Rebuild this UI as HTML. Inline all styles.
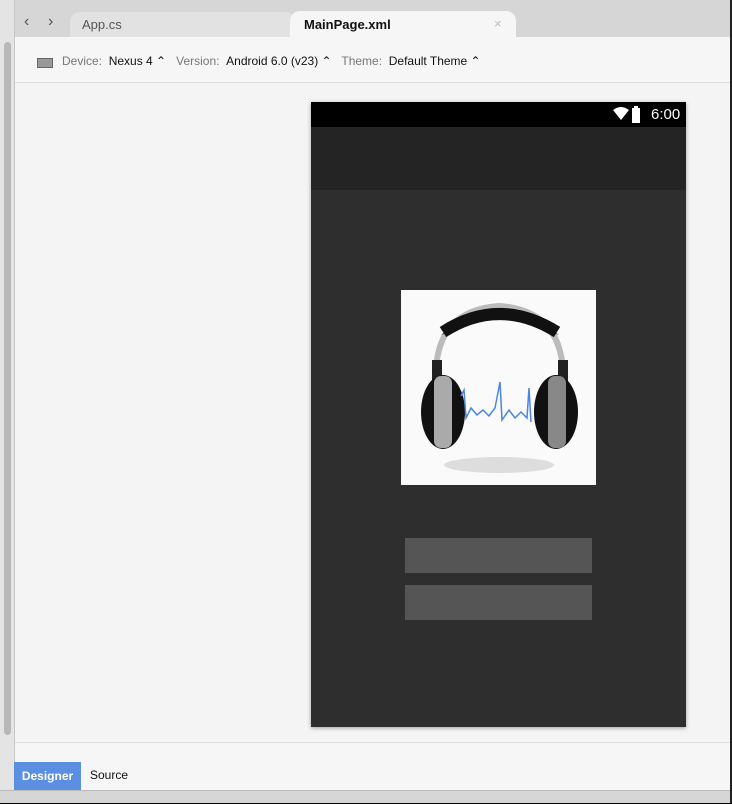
<!DOCTYPE html><html><head><style>
body{margin:0;width:732px;height:803px;position:relative;overflow:hidden;background:#f4f4f4;font-family:"Liberation Sans",sans-serif;}
.a{position:absolute}
</style></head><body>
<div class="a" style="left:0;top:0;width:732px;height:37px;background:#d6d6d6"></div>
<div class="a" style="left:0;top:0;width:14px;height:803px;background:#e4e4e4;border-right:1px solid #c8c8c8"></div>
<div class="a" style="left:4px;top:42px;width:7px;height:693px;background:#b8b8b8;border-radius:4px"></div>
<div class="a" style="left:24px;top:13px;font-size:16px;color:#555">&#8249;</div>
<div class="a" style="left:48px;top:13px;font-size:16px;color:#555">&#8250;</div>
<div class="a" style="left:70px;top:12px;width:225px;height:25px;background:#e2e2e2;border-radius:10px 10px 0 0"></div>
<div class="a" style="left:82px;top:17px;font-size:13px;color:#555">App.cs</div>
<div class="a" style="left:290px;top:11px;width:226px;height:26px;background:#f6f6f6;border-radius:10px 10px 0 0"></div>
<div class="a" style="left:304px;top:17px;font-size:13px;font-weight:bold;color:#111">MainPage.xml</div>
<div class="a" style="left:494px;top:16px;font-size:13px;color:#bbb">×</div>
<div class="a" style="left:15px;top:37px;width:716px;height:45px;background:#f6f6f6;border-bottom:1px solid #ddd"></div>
<div class="a" style="left:37px;top:58px;width:14px;height:8px;border:1px solid #666;background:#999"></div>
<div class="a" style="left:62px;top:54px;font-size:12px;color:#777;white-space:nowrap">Device: <span style="color:#111">&nbsp;Nexus 4 ⌃</span>&nbsp;&nbsp; Version: <span style="color:#111">&nbsp;Android 6.0 (v23) ⌃</span>&nbsp;&nbsp; Theme: <span style="color:#111">&nbsp;Default Theme ⌃</span></div>
<div class="a" style="left:15px;top:742px;width:716px;height:48px;background:#f6f6f6;border-top:1px solid #ddd"></div>
<div class="a" style="left:14px;top:762px;width:67px;height:28px;background:#5b8fe2;color:#fff;font-size:12px;font-weight:bold;line-height:28px;text-align:center">Designer</div>
<div class="a" style="left:90px;top:768px;font-size:12px;color:#111">Source</div>
<div class="a" style="left:0;top:790px;width:732px;height:12px;background:#d6d6d6;border-top:1px solid #bbb;border-bottom:1px solid #000"></div>
<div class="a" style="left:730px;top:0;width:2px;height:803px;background:#222"></div>
<div class="a" style="left:311px;top:102px;width:375px;height:625px;background:#2e2e2e;box-shadow:0 1px 4px rgba(0,0,0,.35)"></div>
<div class="a" style="left:311px;top:102px;width:375px;height:25px;background:#000"></div>
<svg class="a" style="left:612px;top:106px" width="36" height="18"><path d="M1 4 Q9 -2 17 4 L9 14Z" fill="#fff"/><rect x="20" y="2" width="8" height="15" fill="#fff"/><rect x="22" y="0" width="4" height="3" fill="#fff"/></svg>
<div class="a" style="left:651px;top:106px;font-size:15px;color:#fff">6:00</div>
<div class="a" style="left:311px;top:127px;width:375px;height:63px;background:#242424"></div>
<div class="a" style="left:401px;top:290px;width:195px;height:195px;background:#fafafa"></div>
<svg class="a" style="left:401px;top:290px" width="195" height="195">
<ellipse cx="98" cy="175" rx="55" ry="8" fill="#ddd"/>
<path d="M35 80 Q38 20 98 16 Q158 20 162 80" fill="none" stroke="#bbb" stroke-width="6"/>
<path d="M40 45 Q98 0 158 45 L145 40 Q98 18 53 40Z" fill="#222"/>
<path d="M42 42 Q98 6 156 42" fill="none" stroke="#111" stroke-width="12"/>
<rect x="31" y="70" width="10" height="22" fill="#222"/>
<rect x="157" y="70" width="10" height="22" fill="#222"/>
<ellipse cx="42" cy="122" rx="22" ry="37" fill="#111"/>
<rect x="33" y="86" width="18" height="72" rx="7" fill="#aaa"/>
<ellipse cx="155" cy="122" rx="22" ry="37" fill="#111"/>
<rect x="147" y="86" width="18" height="72" rx="7" fill="#888"/>
<path d="M60 106 L63 100 L65 128 L70 118 L76 125 L82 120 L88 126 L94 118 L99 92 L101 130 L108 120 L114 128 L120 122 L126 128 L128 98 L130 132" fill="none" stroke="#4a85e0" stroke-width="1.5"/>
</svg>
<div class="a" style="left:405px;top:538px;width:187px;height:35px;background:#555"></div>
<div class="a" style="left:405px;top:585px;width:187px;height:35px;background:#555"></div>
</body></html>
